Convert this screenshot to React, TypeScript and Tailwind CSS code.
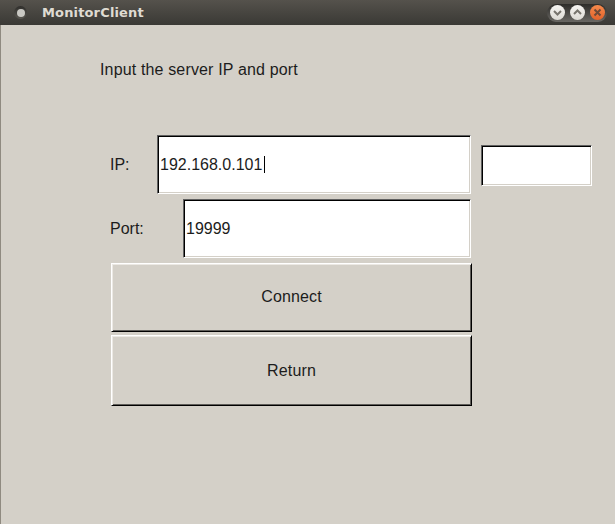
const font = "font-['Liberation_Sans',Arial,sans-serif]";

function Field({ value, caret, className }: { value?: string; caret?: boolean; className: string }) {
  return (
    <div className={`flex items-center border border-t-[#606060] border-l-[#606060] border-r-white border-b-white bg-white shadow-[inset_1px_1px_0_#000000,inset_-1px_-1px_0_#d4d0c8] ${className}`}>
      <span className="pl-[2px] text-[16px] leading-none text-[#1c1c1c]">{value}</span>
      {caret && <span className="ml-[2px] h-[17px] w-[1px] bg-black" />}
    </div>
  );
}

function PushButton({ label, className }: { label: string; className: string }) {
  return (
    <button className={`ml-[1px] block w-[361px] border border-t-white border-l-white border-r-black border-b-black bg-[#d4d0c8] text-[16px] tracking-[0.15px] text-[#1c1c1c] shadow-[inset_1px_1px_0_#ece9e4,inset_-1px_-1px_0_#5f5d59] ${className}`}>
      {label}
    </button>
  );
}

export default function App() {
  return (
    <div className={`flex h-[524px] w-[615px] flex-col overflow-hidden bg-[#d4d0c8] ${font}`}>
      {/* Title bar */}
      <div className="flex h-[25px] shrink-0 items-center justify-between bg-gradient-to-b from-[#55524c] to-[#3a3935] pl-[14px] pr-[8px]">
        <div className="flex items-center">
          <span className="flex h-[13px] w-[13px] items-center justify-center rounded-full bg-gradient-to-b from-[#2f2e2b] to-[#5a5852]">
            <span className="h-[8px] w-[8px] rounded-full bg-[#c9c8c3]" />
          </span>
          <span className="ml-[15px] font-['DejaVu_Sans',sans-serif] text-[13px] font-bold tracking-[0.15px] text-[#dfdbd2]">MonitorClient</span>
        </div>
        <div className="flex h-[18px] w-[60px] items-center justify-center gap-[5px] rounded-full bg-gradient-to-b from-[#2e2d2a] to-[#6a6864]">
          <span className="flex h-[15px] w-[15px] items-center justify-center rounded-full bg-gradient-to-b from-[#f6f5f2] to-[#dcdad4]">
            <svg width="9" height="9" viewBox="0 0 9 9" fill="none" stroke="#77746d" strokeWidth="2"><path d="M1 3l3.5 3.5L8 3" /></svg>
          </span>
          <span className="flex h-[15px] w-[15px] items-center justify-center rounded-full bg-gradient-to-b from-[#f6f5f2] to-[#dcdad4]">
            <svg width="9" height="9" viewBox="0 0 9 9" fill="none" stroke="#77746d" strokeWidth="2"><path d="M1 6l3.5-3.5L8 6" /></svg>
          </span>
          <span className="flex h-[15px] w-[15px] items-center justify-center rounded-full bg-gradient-to-b from-[#f58a4c] to-[#e2622a]">
            <svg width="9" height="9" viewBox="0 0 9 9" fill="none" stroke="#6e4a38" strokeWidth="2"><path d="M1.5 1.5l6 6M7.5 1.5l-6 6" /></svg>
          </span>
        </div>
      </div>

      {/* Form */}
      <div className="flex flex-1 flex-col border-l border-l-[#8f8a80] pl-[109px] text-[#1c1c1c]">
        <p className="-ml-[10px] mt-[36px] text-[16px] leading-[18px] tracking-[0.15px]">Input the server IP and port</p>

        <div className="mt-[56px] flex h-[59px] items-start">
          <span className="w-[47px] self-center text-[16px]">IP:</span>
          <Field value="192.168.0.101" caret className="h-[59px] w-[314px]" />
          <Field className="ml-[10px] mt-[10px] h-[41px] w-[111px]" />
        </div>

        <div className="mt-[5px] flex h-[59px] items-center">
          <span className="w-[73px] text-[16px]">Port:</span>
          <Field value="19999" className="h-[59px] w-[288px]" />
        </div>

        <PushButton label="Connect" className="mt-[5px] h-[69px] pb-[2px]" />
        <PushButton label="Return" className="mt-[3px] h-[71px]" />
      </div>
    </div>
  );
}
